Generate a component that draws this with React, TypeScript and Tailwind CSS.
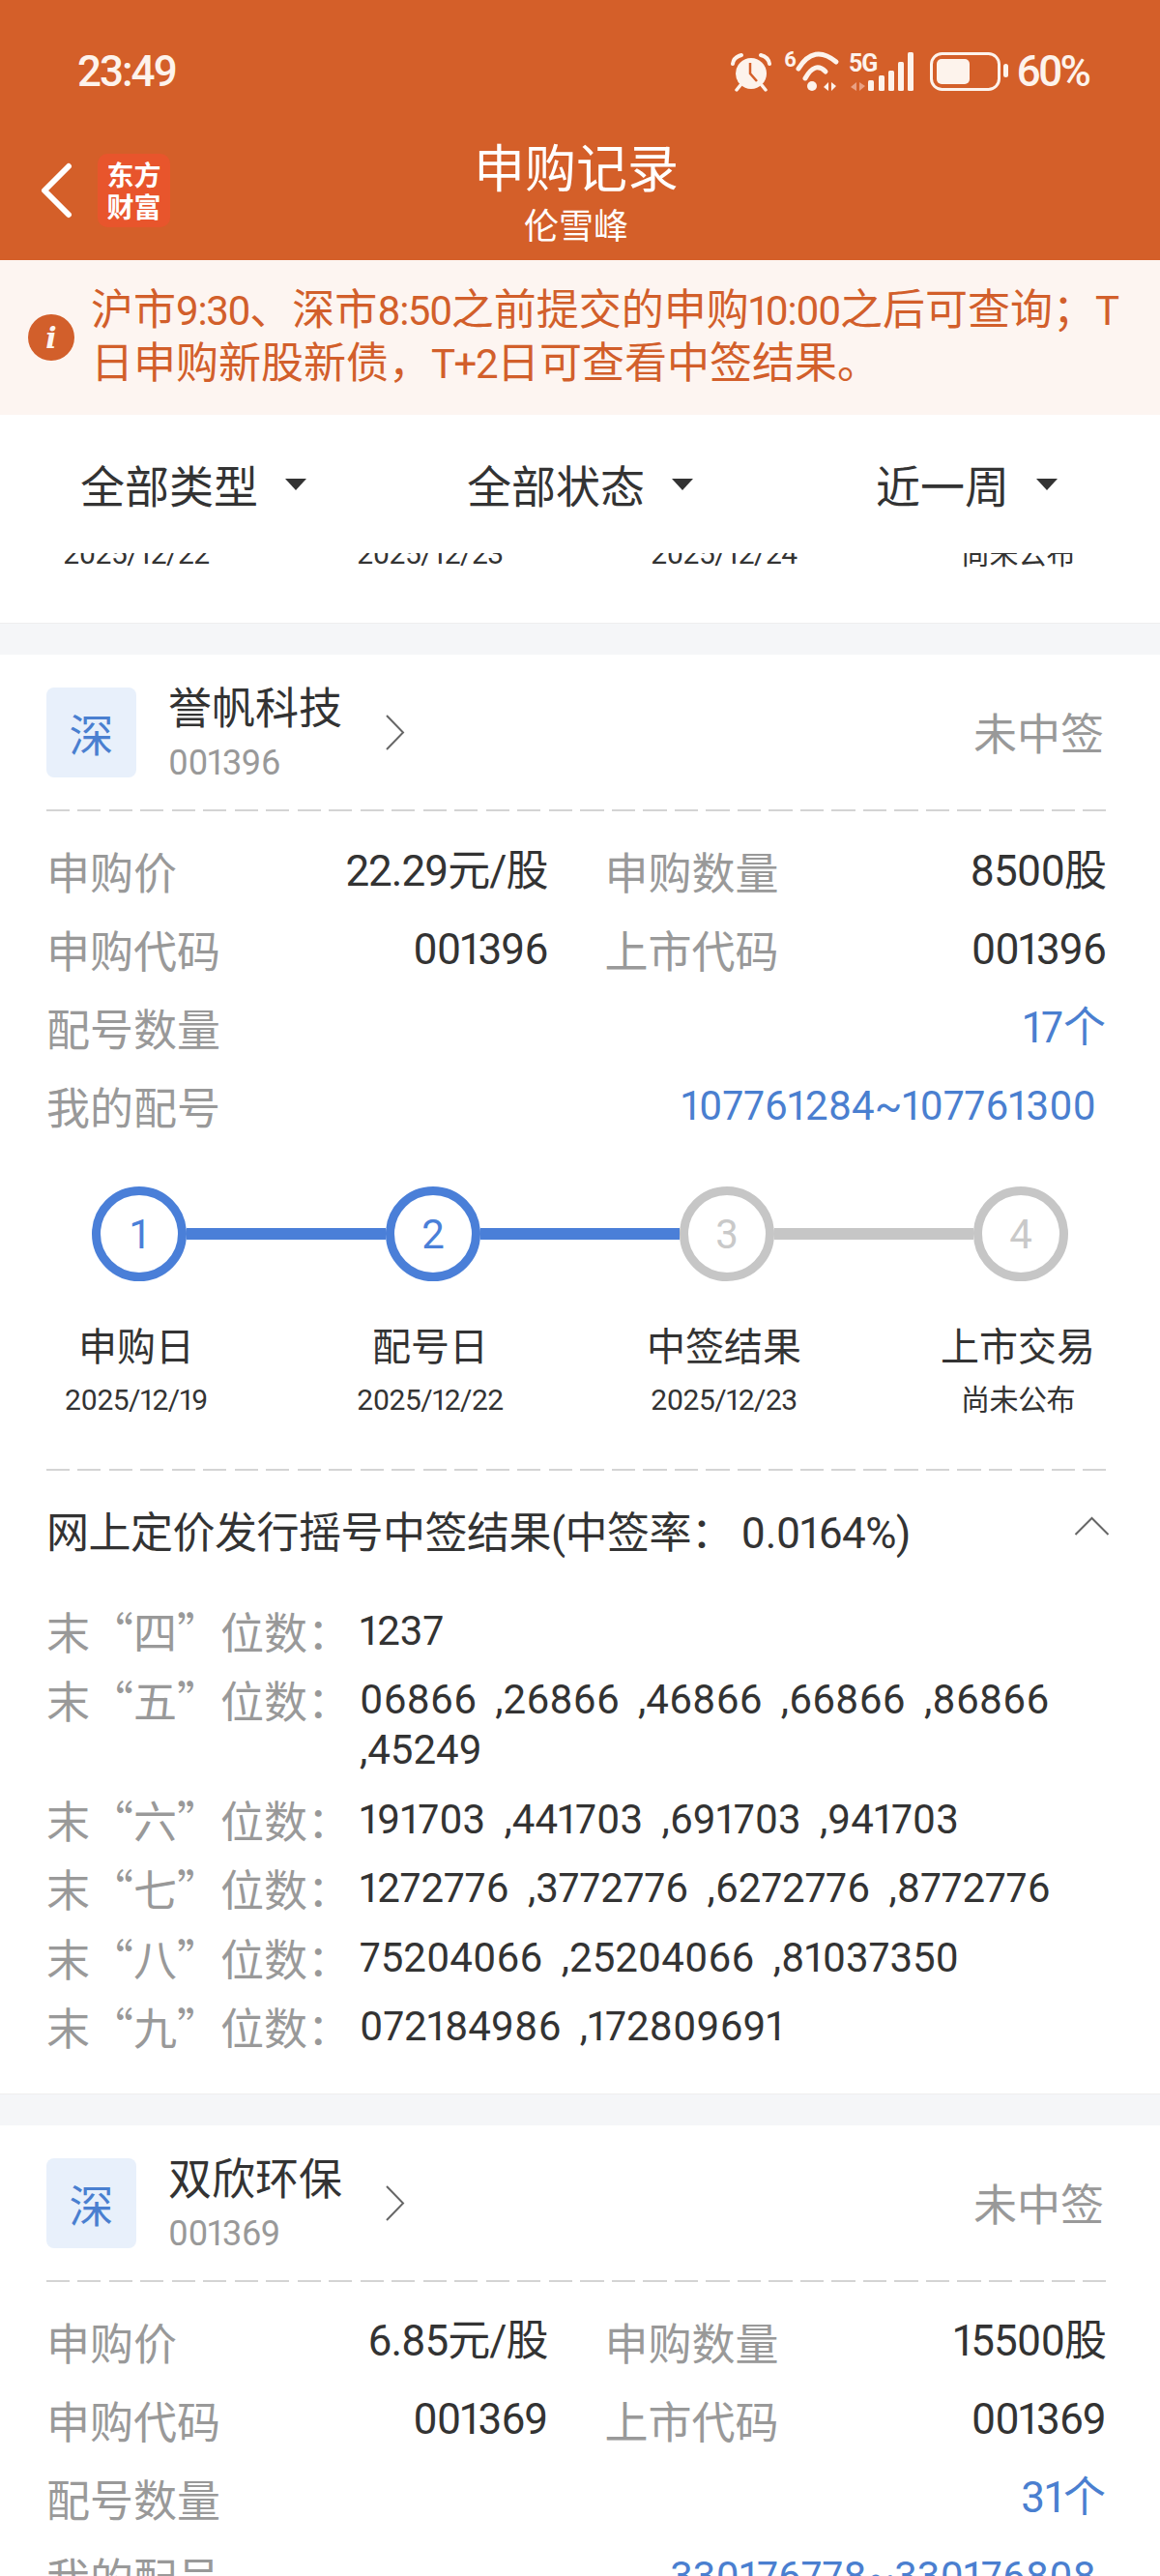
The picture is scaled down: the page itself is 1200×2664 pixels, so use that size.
const CJK = "font-['Noto_Sans_CJK_SC',sans-serif]";

type Step = { no: string; title: string; date: string; done: boolean };

const steps: Step[] = [
  { no: "1", title: "申购日", date: "2025/12/19", done: true },
  { no: "2", title: "配号日", date: "2025/12/22", done: true },
  { no: "3", title: "中签结果", date: "2025/12/23", done: false },
  { no: "4", title: "上市交易", date: "尚未公布", done: false },
];

// dates of the record scrolled under the filter bar
const prevDates = ["2025/12/22", "2025/12/23", "2025/12/24", "尚未公布"];

const lots = [
  { label: "末“四”位数：", nums: ["1237"] },
  { label: "末“五”位数：", nums: ["06866", "26866", "46866", "66866", "86866", "45249"] },
  { label: "末“六”位数：", nums: ["191703", "441703", "691703", "941703"] },
  { label: "末“七”位数：", nums: ["1272776", "3772776", "6272776", "8772776"] },
  { label: "末“八”位数：", nums: ["75204066", "25204066", "81037350"] },
  { label: "末“九”位数：", nums: ["072184986", "172809691"] },
];

function StatusIcons() {
  return (
    <svg width="292" height="46" viewBox="754 50 292 46" fill="none">
      {/* alarm clock */}
      <circle cx="778" cy="75" r="16" fill="#fdf3ec" />
      <path d="M777 64v11l7 8" stroke="#d45f29" strokeWidth="2.5" />
      <path d="M759 65q1-7 9-9M797 65q-1-7-9-9" stroke="#fdf3ec" strokeWidth="4" strokeLinecap="round" />
      <path d="M763 92l4-5M793 92l-4-5" stroke="#fdf3ec" strokeWidth="3.5" strokeLinecap="round" />
      {/* wifi */}
      <text x="812" y="68" fill="#fdf3ec" fontSize="22" fontWeight="700" fontFamily="Roboto">6</text>
      <path d="M827 70Q843 44 866 63" stroke="#fdf3ec" strokeWidth="5" strokeLinecap="round" />
      <path d="M834 80Q844 62 855 73" stroke="#fdf3ec" strokeWidth="5" strokeLinecap="round" />
      <circle cx="841" cy="88" r="5" fill="#fdf3ec" />
      <path d="M858 93v-9l-5 5zM861 84v9l5-5z" fill="#fdf3ec" />
      {/* cellular */}
      <text x="879" y="73" fill="#fdf3ec" fontSize="25" fontWeight="700" fontFamily="Roboto" letterSpacing="-1">5G</text>
      <path d="M887 93v-9l-6 5zM890 84v9l6-5z" fill="#e9a184" />
      <rect x="899" y="82" width="6" height="11" rx="1.5" fill="#fdf3ec" />
      <rect x="910" y="77" width="6" height="16" rx="1.5" fill="#fdf3ec" />
      <rect x="920" y="72" width="6" height="21" rx="1.5" fill="#fdf3ec" />
      <rect x="930" y="63" width="6" height="30" rx="1.5" fill="#fdf3ec" />
      <rect x="940" y="53" width="6" height="40" rx="1.5" fill="#fdf3ec" />
      {/* battery */}
      <rect x="964.5" y="54.5" width="70" height="37" rx="11" stroke="#fdf3ec" strokeWidth="3" />
      <rect x="970" y="60" width="34" height="26" rx="5" fill="#fdf3ec" />
      <rect x="1039" y="65" width="5" height="14" rx="2.5" fill="#fdf3ec" />
    </svg>
  );
}

function Header() {
  return (
    <header className="h-[269px] bg-[#d45f29] text-white">
      <div className="flex h-[148px] items-center justify-between pl-[80px] pr-[74px] text-[#fdf3ec]">
        <span className="text-[44px] font-medium tracking-[-2px]">23:49</span>
        <div className="flex items-center gap-[6px]">
          <StatusIcons />
          <span className="text-[44px] font-medium tracking-[-3px]">60%</span>
        </div>
      </div>
      <div className="grid grid-cols-[1fr_auto_1fr]">
        <div className="flex h-[98px] items-center pl-[41px]">
          <svg width="34" height="58" viewBox="0 0 34 58" fill="none">
            <path d="M30 4L5 29l25 25" stroke="white" strokeWidth="6" strokeLinecap="round" strokeLinejoin="round" />
          </svg>
          <div className={`ml-[26px] flex h-[76px] w-[75px] flex-col items-center justify-center rounded-[10px] bg-[#e8552c] text-[28px] font-bold leading-[33px] ${CJK}`}>
            <span>东方</span>
            <span>财富</span>
          </div>
        </div>
        <div className={`mr-[8px] flex flex-col items-center text-center ${CJK}`}>
          <div className="-mt-[3px] text-[53px] leading-[52px]">申购记录</div>
          <div className="mt-[12px] text-[36px] leading-[44px]">伦雪峰</div>
        </div>
        <div />
      </div>
    </header>
  );
}

// digits and latin letters in the notice run narrower than the CJK text
function Tight({ children }: { children: React.ReactNode }) {
  return <span className="text-[42px] tracking-[-1.5px]">{children}</span>;
}

function Notice() {
  return (
    <div className={`flex h-[160px] items-center bg-[#fdf5f1] pl-[29px] text-[#d25f2b] ${CJK}`}>
      <span className="flex h-[48px] w-[48px] shrink-0 items-center justify-center rounded-full bg-[#d25f2b] font-['DejaVu_Serif',serif] text-[30px] font-bold italic text-[#fdf5f1]">
        i
      </span>
      <p className="ml-[17px] whitespace-nowrap font-['Roboto','Noto_Sans_CJK_SC',sans-serif] text-[44px] leading-[55px]">
        沪市<Tight>9:30</Tight>、深市<Tight>8:50</Tight>之前提交的申购<Tight>10:00</Tight>之后可查询；<Tight>T</Tight>
        <br />
        日申购新股新债，<Tight>T+2</Tight>日可查看中签结果。
      </p>
    </div>
  );
}

function Filter({ label }: { label: string }) {
  return (
    <div className="flex items-center justify-center gap-[28px]">
      <span className={`text-[46px] text-[#333] ${CJK}`}>{label}</span>
      <span className="h-0 w-0 border-x-[11px] border-t-[12px] border-x-transparent border-t-[#333]" />
    </div>
  );
}

function Dashed() {
  return <div className="h-[2px] w-full bg-[repeating-linear-gradient(90deg,#d4d4d4_0_24px,transparent_24px_32.5px)]" />;
}

function Field({ label, value }: { label: string; value: string }) {
  return (
    <div className="flex items-center justify-between">
      <span className={`text-[45px] text-[#999] ${CJK}`}>{label}</span>
      <span className="text-[44px] tracking-[-1px] text-[#333]">{value}</span>
    </div>
  );
}

function StepDates({ dates, className }: { dates: string[]; className?: string }) {
  return (
    <div className={`ml-[-59px] mr-[-61px] grid grid-cols-4 text-center text-[30px] leading-[40px] tracking-[-0.5px] text-[#333] ${className ?? ""}`}>
      {dates.map((d) => (
        <span key={d}>{d}</span>
      ))}
    </div>
  );
}

function Stepper() {
  return (
    <div className="mt-[43px]">
      <div className="ml-[47px] mr-[39px] flex items-center">
        {steps.map((s, i) => (
          <div key={s.no} className="contents">
            <span
              className={`flex h-[98px] w-[98px] shrink-0 items-center justify-center rounded-full border-[9px] text-[42px] ${
                s.done ? "border-[#4a7fd8] text-[#4a7fd8]" : "border-[#c6c6c6] text-[#c9c9c9]"
              }`}
            >
              {s.no}
            </span>
            {i < 3 && <span className={`h-[12px] flex-1 ${s.done ? "bg-[#4a7fd8]" : "bg-[#c6c6c6]"}`} />}
          </div>
        ))}
      </div>
      <div className={`ml-[-59px] mr-[-61px] mt-[40px] grid grid-cols-4 text-center text-[40px] leading-[50px] text-[#333] ${CJK}`}>
        {steps.map((s) => (
          <span key={s.no}>{s.title}</span>
        ))}
      </div>
      <StepDates dates={steps.map((s) => s.date)} className="mt-[13px]" />
    </div>
  );
}

function Lottery() {
  return (
    <>
      <div className="mt-[51px]">
        <Dashed />
      </div>
      <div className="mt-[38px] flex h-[50px] items-center justify-between text-[44px] text-[#333]">
        <span className="tracking-[-0.5px]">
          <span className={CJK}>网上定价发行摇号中签结果</span>(<span className={CJK}>中签率：</span>
          <span className="ml-[8px]">0.0164%)</span>
        </span>
        <svg width="37" height="22" viewBox="0 0 37 22" fill="none" className="mb-[12px] mr-[-4px]">
          <path d="M1.5 20L18.5 3l17 17" stroke="#666" strokeWidth="2" />
        </svg>
      </div>
      <div className="mt-[52px] flex flex-col gap-[19.4px] pb-[43px] text-[42px] leading-[52px]">
        {lots.map((row) => (
          <div key={row.label} className="flex">
            <span className={`w-[324px] shrink-0 text-[45px] text-[#999] ${CJK}`}>{row.label}</span>
            <span className="text-[#333] [word-spacing:9px]">{row.nums.join(" ,")}</span>
          </div>
        ))}
      </div>
    </>
  );
}

type CardProps = {
  name: string;
  code: string;
  price: string;
  shares: string;
  count: string;
  range: string;
  children?: React.ReactNode;
};

function Card({ name, code, price, shares, count, range, children }: CardProps) {
  return (
    <section className="bg-white pl-[48px] pr-[56px]">
      <div className="flex h-[160px] pt-[34px]">
        <span className={`flex h-[93px] w-[93px] items-center justify-center rounded-[8px] bg-[#e8f0fb] text-[46px] text-[#4a7fd0] ${CJK}`}>
          深
        </span>
        <div className="ml-[33px] flex flex-col">
          <span className={`-mt-[3px] text-[45px] leading-[44px] text-[#333] ${CJK}`}>{name}</span>
          <span className="mt-[17px] text-[36px] leading-[40px] tracking-[-0.5px] text-[#999]">{code}</span>
        </div>
        <svg width="21" height="37" viewBox="0 0 21 37" fill="none" className="ml-[44px] mt-[28px]">
          <path d="M2 1l17 17.5L2 36" stroke="#666" strokeWidth="2" />
        </svg>
        <span className={`ml-auto mr-[2px] mt-[24px] text-[45px] leading-[44px] text-[#999] ${CJK}`}>未中签</span>
      </div>
      <Dashed />
      <div className="grid auto-rows-[81px] grid-cols-2 gap-x-[59px] pt-[21px]">
        <Field label="申购价" value={price} />
        <Field label="申购数量" value={shares} />
        <Field label="申购代码" value={code} />
        <Field label="上市代码" value={code} />
        <div className="col-span-2 flex items-center justify-between">
          <span className={`text-[45px] text-[#999] ${CJK}`}>配号数量</span>
          <span className="text-[44px] text-[#4a7fd0]">{count}</span>
        </div>
        <div className="col-span-2 flex items-center justify-between pr-[10px]">
          <span className={`text-[45px] text-[#999] ${CJK}`}>我的配号</span>
          <span className="text-[42px] text-[#4a7fd0]">{range}</span>
        </div>
      </div>
      {children}
    </section>
  );
}

export default function App() {
  return (
    <div className="h-[2664px] w-[1200px] overflow-hidden bg-white font-['Roboto','Noto_Sans_CJK_SC',sans-serif] proportional-nums">
      <Header />
      <Notice />
      <div className="grid h-[143px] grid-cols-3 items-center">
        <Filter label="全部类型" />
        <Filter label="全部状态" />
        <Filter label="近一周" />
      </div>
      {/* tail of the previous record, scrolled under the filter bar */}
      <div className="h-[72px] overflow-hidden pl-[48px] pr-[56px]">
        <StepDates dates={prevDates} className="mt-[-19px]" />
      </div>
      <div className="h-[33px] border-t border-[#eeeeee] bg-[#f5f6f8]" />
      <Card
        name="誉帆科技"
        code="001396"
        price="22.29元/股"
        shares="8500股"
        count="17个"
        range="107761284~107761300"
      >
        <Stepper />
        <Lottery />
      </Card>
      <div className="h-[33px] border-t border-[#eeeeee] bg-[#f5f6f8]" />
      <Card
        name="双欣环保"
        code="001369"
        price="6.85元/股"
        shares="15500股"
        count="31个"
        range="330176778~330176808"
      />
    </div>
  );
}
